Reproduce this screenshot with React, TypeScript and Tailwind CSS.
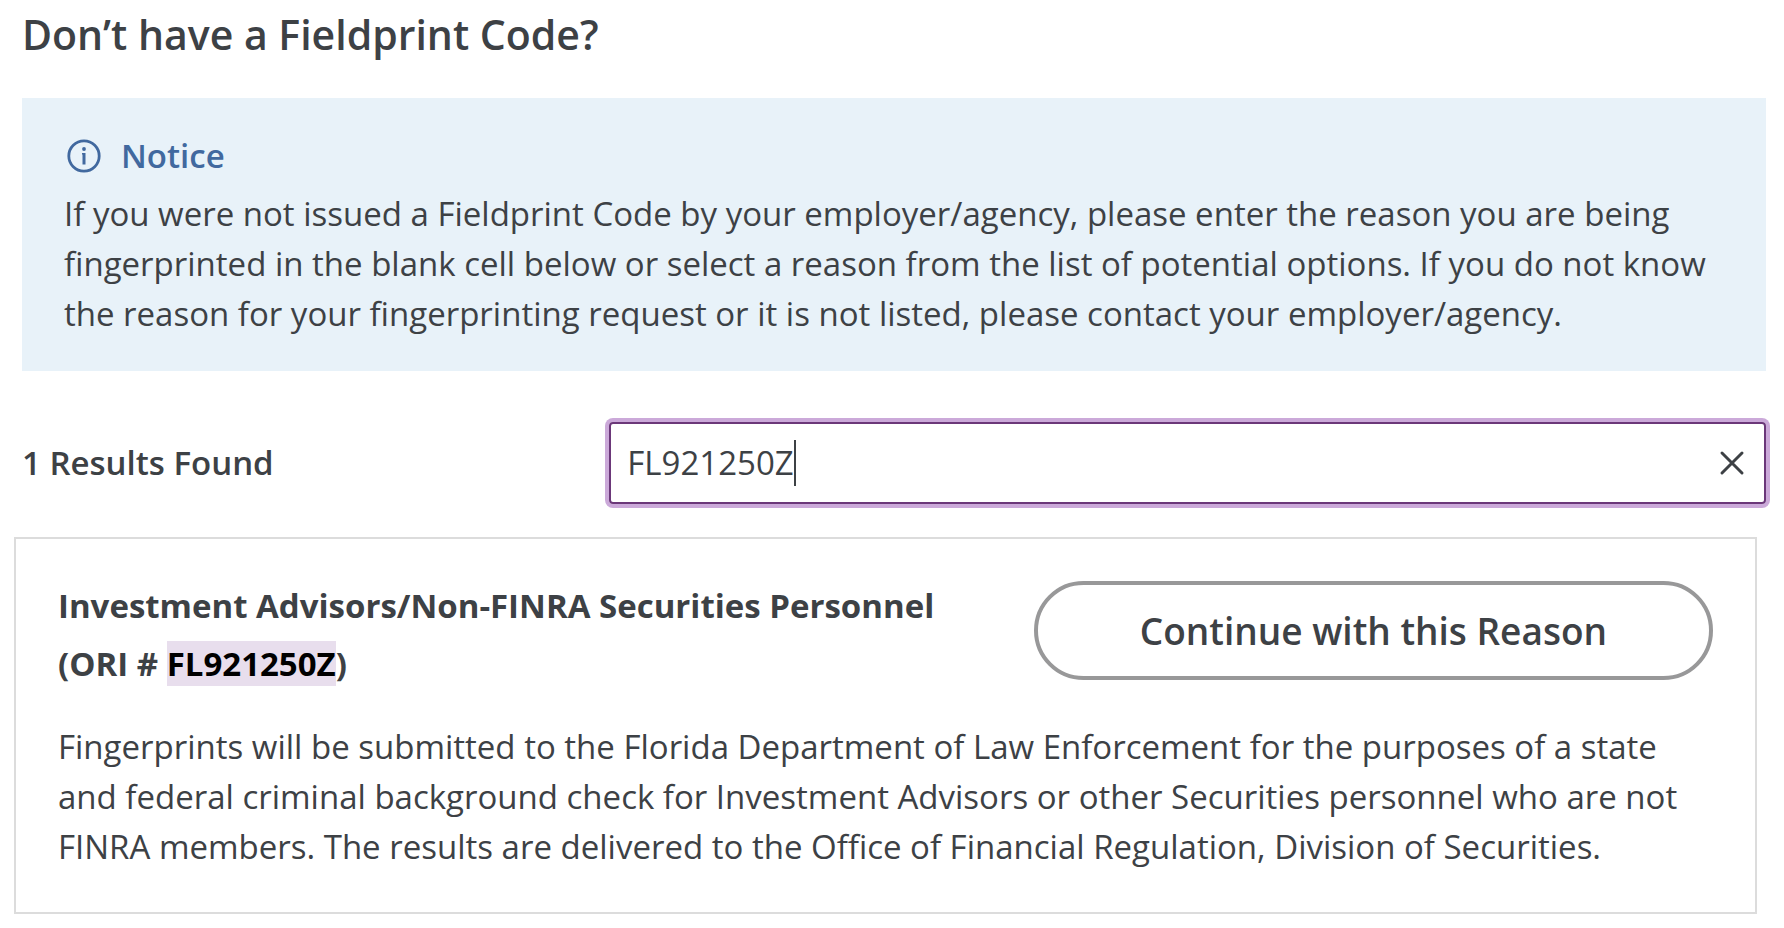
import { useState } from 'react'

interface Reason {
  title: string
  ori: string
  description: string
}

const reasons: Reason[] = [
  {
    title: 'Investment Advisors/Non-FINRA Securities Personnel',
    ori: 'FL921250Z',
    description:
      'Fingerprints will be submitted to the Florida Department of Law Enforcement for the purposes of a state and federal criminal background check for Investment Advisors or other Securities personnel who are not FINRA members. The results are delivered to the Office of Financial Regulation, Division of Securities.',
  },
]

function InfoIcon() {
  return (
    <svg className="w-[34px] h-[34px] shrink-0" viewBox="0 0 34 34" fill="none" stroke="currentColor" aria-hidden="true">
      <circle cx="17" cy="17" r="15.2" strokeWidth="2.8" />
      <path strokeWidth="3" d="M17 14v11.5" />
      <path strokeWidth="1.6" d="M15 14.8h2" />
      <circle cx="17" cy="10" r="1.9" fill="currentColor" stroke="none" />
    </svg>
  )
}

function ReasonCard({ reason, query }: { reason: Reason; query: string }) {
  return (
    <li className="border-2 border-[#dcdcdc] px-[42px] pt-[38px] pb-10">
      <div className="flex items-start justify-between gap-12">
        <h2 className="flex-1 font-bold leading-[58px]">
          {reason.title} (ORI #{' '}
          {reason.ori === query ? (
            <mark className="bg-[#e8deed] text-black">{reason.ori}</mark>
          ) : (
            reason.ori
          )}
          )
        </h2>
        <button
          type="button"
          className="mt-1 rounded-full border-4 border-[#989899] px-[102px] py-5 text-[37px] leading-[51px] font-semibold whitespace-nowrap"
        >
          Continue with this Reason
        </button>
      </div>
      <p className="mt-[29px]">{reason.description}</p>
    </li>
  )
}

export default function App() {
  const [query, setQuery] = useState('FL921250Z')

  const results = reasons.filter((r) => r.ori.includes(query.trim().toUpperCase()))

  return (
    <main className="min-h-screen bg-white pt-1.5 pb-3 font-['Open_Sans','Noto_Sans',sans-serif] text-[33px] leading-[50px] text-[#3d4145]">
      <div className="pl-[22px] pr-[18px]">
        <h1 className="text-[41px] leading-[56px] font-semibold">Don’t have a Fieldprint Code?</h1>

        <section className="mt-9 bg-[#e8f2f9] px-[42px] pt-[33px] pb-8">
          <div className="flex items-center gap-5 px-[3px] text-[#41699f]">
            <InfoIcon />
            <h2 className="font-semibold">Notice</h2>
          </div>
          <p className="mt-2">
            If you were not issued a Fieldprint Code by your employer/agency, please enter the reason you are being
            fingerprinted in the blank cell below or select a reason from the list of potential options. If you do not
            know the reason for your fingerprinting request or it is not listed, please contact your employer/agency.
          </p>
        </section>

        <div className="mt-[51px] flex items-center gap-1.5">
          <label htmlFor="reason-search" className="w-1/3 font-semibold">
            {results.length} Results Found
          </label>
          <div className="flex flex-1 items-center rounded-[4px] border-2 border-[#6b3779] px-4 py-3.5 ring-4 ring-[#cba9d9]">
            <div className="flex flex-1 items-center">
              <input
                id="reason-search"
                type="text"
                value={query}
                onChange={(e) => setQuery(e.target.value)}
                className="field-sizing-content bg-transparent caret-transparent outline-none"
              />
              <span className="h-[46px] w-[2px] bg-[#3d4145]" />
            </div>
            <button type="button" aria-label="Clear search" onClick={() => setQuery('')}>
              <svg className="w-8 h-8" viewBox="0 0 32 32" fill="none" stroke="currentColor">
                <path strokeLinecap="round" strokeWidth={3} d="M6 6l20 20M26 6L6 26" />
              </svg>
            </button>
          </div>
        </div>
      </div>

      <ul className="mt-[33px] ml-[14px] mr-[27px]">
        {results.map((r) => (
          <ReasonCard key={r.ori} reason={r} query={query} />
        ))}
      </ul>
    </main>
  )
}
